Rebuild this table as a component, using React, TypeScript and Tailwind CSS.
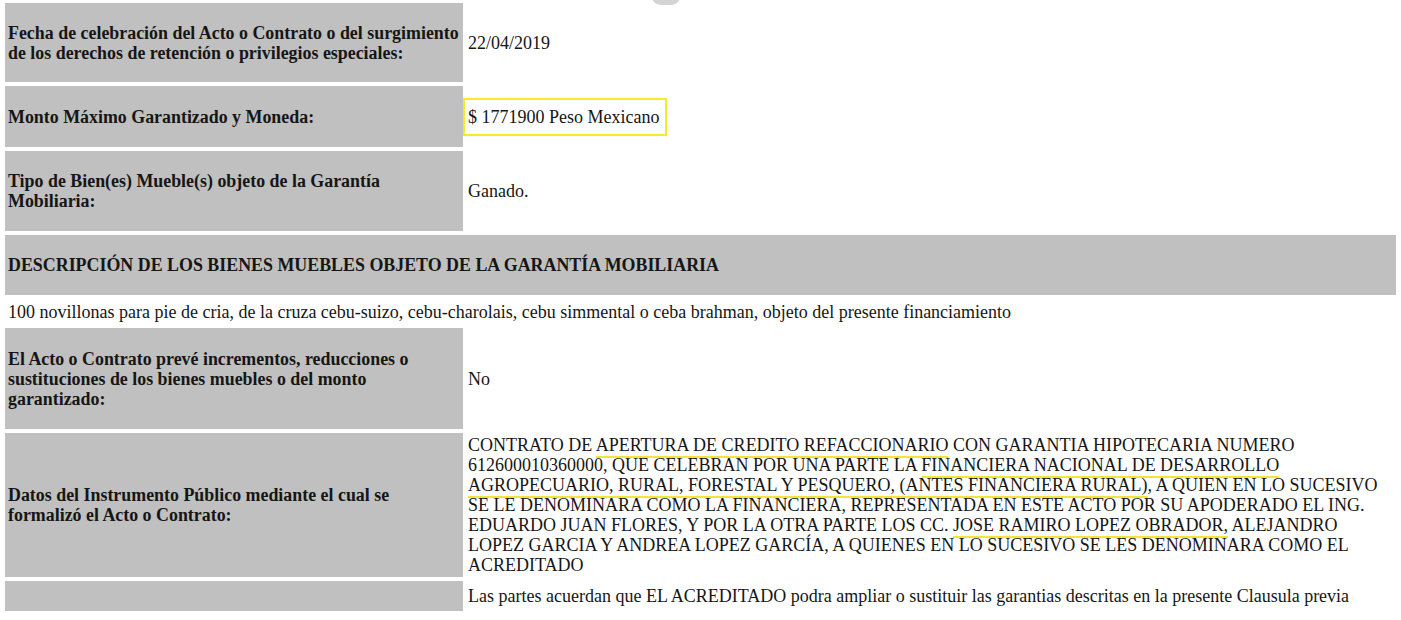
const hl = 'underline decoration-[#f3e43a] decoration-2 underline-offset-[5px]'

function Label({ children }: { children: React.ReactNode }) {
  return (
    <td className="w-[458px] whitespace-nowrap bg-[#c0c0c0] pl-[3px] align-middle text-[17.9px] font-bold leading-5">
      {children}
    </td>
  )
}

export default function App() {
  return (
    <div
      className="relative h-[620px] w-[1401px] overflow-hidden bg-white text-[#161616]"
      style={{ fontFamily: '"Liberation Serif", "Times New Roman", serif' }}
    >
      {/* piece of a control cut by the top edge */}
      <div className="absolute left-[652px] top-[-12px] h-[17px] w-[28px] rounded-full bg-[#d4d4d4]" />

      <table className="-mt-px ml-px w-[1399px] table-fixed border-separate border-spacing-1 text-[18px] leading-5">
        <colgroup>
          <col className="w-[458px]" />
          <col />
        </colgroup>
        <tbody>
          <tr className="h-[79px]">
            <Label>
              Fecha de celebración del Acto o Contrato o del surgimiento
              <br />
              de los derechos de retención o privilegios especiales:
            </Label>
            <td className="pl-px align-middle">22/04/2019</td>
          </tr>
          <tr className="h-[61px]">
            <Label>Monto Máximo Garantizado y Moneda:</Label>
            <td className="align-middle">
              <span className="-ml-[4px] inline-block border-2 border-[#f6ea2a] py-[7px] pl-[3px] pr-[6px]">
                $ 1771900 Peso Mexicano
              </span>
            </td>
          </tr>
          <tr className="h-[80px]">
            <Label>
              Tipo de Bien(es) Mueble(s) objeto de la Garantía
              <br />
              Mobiliaria:
            </Label>
            <td className="pl-px align-middle">Ganado.</td>
          </tr>
          <tr className="h-[60px]">
            <td colSpan={2} className="bg-[#c0c0c0] pl-[3px] align-middle text-[17.9px] font-bold">
              DESCRIPCIÓN DE LOS BIENES MUEBLES OBJETO DE LA GARANTÍA MOBILIARIA
            </td>
          </tr>
          <tr className="h-[25px]">
            <td colSpan={2} className="pl-[3px] align-middle">
              100 novillonas para pie de cria, de la cruza cebu-suizo, cebu-charolais, cebu simmental o ceba
              brahman, objeto del presente financiamiento
            </td>
          </tr>
          <tr className="h-[101px]">
            <Label>
              El Acto o Contrato prevé incrementos, reducciones o
              <br />
              sustituciones de los bienes muebles o del monto
              <br />
              garantizado:
            </Label>
            <td className="pl-px align-middle">No</td>
          </tr>
          <tr className="h-[144px]">
            <Label>
              Datos del Instrumento Público mediante el cual se
              <br />
              formalizó el Acto o Contrato:
            </Label>
            <td className="whitespace-nowrap pl-px align-middle">
              CONTRATO DE <span className={hl}>APERTURA DE CREDITO REFACCIONARIO</span> CON GARANTIA
              HIPOTECARIA NUMERO
              <br />
              612600010360000, QUE CELEBRAN POR UNA PARTE LA{' '}
              <span className={hl}>FINANCIERA NACIONAL DE DESARROLLO</span>
              <br />
              <span className={hl}>
                AGROPECUARIO, RURAL, FORESTAL Y PESQUERO, (ANTES FINANCIERA RURAL)
              </span>
              , A QUIEN EN LO SUCESIVO
              <br />
              SE LE DENOMINARA COMO LA FINANCIERA, REPRESENTADA EN ESTE ACTO POR SU APODERADO EL ING.
              <br />
              EDUARDO JUAN FLORES, Y POR LA OTRA PARTE LOS CC.{' '}
              <span className={hl}>JOSE RAMIRO LOPEZ OBRADOR,</span> ALEJANDRO
              <br />
              LOPEZ GARCIA Y ANDREA LOPEZ GARCÍA, A QUIENES EN LO SUCESIVO SE LES DENOMINARA COMO EL
              <br />
              ACREDITADO
            </td>
          </tr>
          <tr className="h-[30px]">
            <td className="bg-[#c0c0c0]" />
            <td className="pl-px align-middle">
              Las partes acuerdan que EL ACREDITADO podra ampliar o sustituir las garantias descritas en la
              presente Clausula previa
            </td>
          </tr>
        </tbody>
      </table>
    </div>
  )
}
